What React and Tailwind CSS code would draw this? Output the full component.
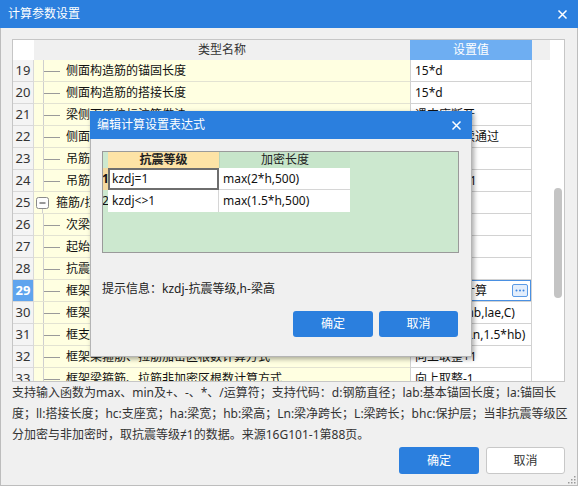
import React from 'react';

const FONT = "font-['Noto_Sans','Noto_Sans_CJK_SC',sans-serif]";

const rows = [
  { n: 19, name: '侧面构造筋的锚固长度', val: '15*d' },
  { n: 20, name: '侧面构造筋的搭接长度', val: '15*d' },
  { n: 21, name: '梁侧面原位标注筋做法', val: '遇支座断开' },
  { n: 22, name: '侧面通长筋遇支座做法', val: '遇支座连续通过' },
  { n: 23, name: '吊筋锚固长度', val: '20*d' },
  { n: 24, name: '吊筋根数计算方式', val: '向上取整+1' },
  { n: 25, name: '箍筋/拉筋', val: '', parent: true },
  { n: 26, name: '次梁两侧共增加箍筋数量', val: '6' },
  { n: 27, name: '起始箍筋距支座边的距离', val: '50' },
  { n: 28, name: '抗震KL、WKL端支座为梁时，则在该端箍筋加密', val: '否' },
  { n: 29, name: '框架梁箍筋加密长度', val: '按照规范计算', sel: true },
  { n: 30, name: '框架扁梁箍筋加密长度', val: 'max(0.5*hb,lae,C)' },
  { n: 31, name: '框支梁箍筋加密长度', val: 'max(0.2*Ln,1.5*hb)' },
  { n: 32, name: '框架梁箍筋、拉筋加密区根数计算方式', val: '向上取整+1' },
  { n: 33, name: '框架梁箍筋、拉筋非加密区根数计算方式', val: '向上取整-1' },
];

function CloseX() {
  return (
    <svg width="11" height="11" viewBox="0 0 11 11">
      <path d="M1.5 1.5L9.5 9.5M9.5 1.5L1.5 9.5" stroke="white" strokeWidth="1.5" />
    </svg>
  );
}

function TreeChild() {
  return (
    <svg width="32" height="21" className="shrink-0">
      <line x1="9.5" y1="0" x2="9.5" y2="21" stroke="#cfcfcf" strokeWidth="1" />
      <line x1="10" y1="11.5" x2="26" y2="11.5" stroke="#9a9a9a" strokeWidth="1" />
    </svg>
  );
}

function TreeParent() {
  return (
    <svg width="22" height="21" className="shrink-0">
      <line x1="8.5" y1="16" x2="8.5" y2="21" stroke="#cfcfcf" strokeWidth="1" />
      <rect x="2.5" y="5.5" width="12" height="11" rx="2" fill="#fdfdfd" stroke="#8a8a8a" />
      <line x1="5.5" y1="11" x2="11.5" y2="11" stroke="#333" strokeWidth="1" />
    </svg>
  );
}

function Row({ r }) {
  return (
    <div className="flex h-[22px] shrink-0">
      <div
        className={`w-[21px] shrink-0 border-r border-b border-[#d9d9d9] flex items-center justify-center text-[13px] ${
          r.sel ? 'bg-[#5fa4ee] text-white font-bold' : 'bg-[#f4f4f4] text-[#333]'
        }`}
      >
        {r.n}
      </div>
      <div className="w-[376px] shrink-0 bg-[#ffffe1] border-b border-[#e3e3d2] flex items-center text-[12px] text-[#111] whitespace-nowrap overflow-hidden">
        {r.parent ? <TreeParent /> : <TreeChild />}
        <span>{r.name}</span>
      </div>
      <div
        className={`w-[122px] shrink-0 border-l border-r border-b border-[#d2d2d2] pl-[4px] pr-[3px] flex items-center justify-between text-[12px] text-[#111] whitespace-nowrap overflow-hidden ${
          r.sel ? 'shadow-[inset_0_0_0_1px_#4a90e2]' : ''
        }`}
      >
        <span>{r.val}</span>
        {r.sel && (
          <span className="w-[16px] h-[13px] rounded-[2px] border border-[#5b9be6] bg-[#e3eefc] flex items-center justify-center">
            <svg width="10" height="3" viewBox="0 0 10 3">
              <circle cx="1.5" cy="1.5" r="1" fill="#3d86e0" />
              <circle cx="5" cy="1.5" r="1" fill="#3d86e0" />
              <circle cx="8.5" cy="1.5" r="1" fill="#3d86e0" />
            </svg>
          </span>
        )}
      </div>
      <div className="w-[18px] shrink-0 bg-white" />
    </div>
  );
}

function Dialog() {
  return (
    <div className="absolute left-[90px] top-[111px] w-[382px] h-[246px] flex flex-col shadow-[2px_2px_5px_rgba(0,0,0,0.35)]">
      <div className="h-[28px] shrink-0 bg-[#2b7fde] flex items-center justify-between pl-[7px] pr-[10px] text-white text-[12px]">
        <span>编辑计算设置表达式</span>
        <CloseX />
      </div>
      <div className="flex-1 bg-[#f0f0f0] border border-t-0 border-[#b4b4b4] flex flex-col pl-[11px] pr-[13px] pt-[12px]">
        <div className="w-[357px] h-[102px] border border-[#9a9a9a] bg-[#cce8cf] flex flex-col">
          <div className="flex h-[16px] text-[12px] text-[#222]">
            <div className="w-[5px] shrink-0" />
            <div className="w-[111px] shrink-0 bg-[#fde3a6] flex items-center justify-center font-bold">抗震等级</div>
            <div className="w-[131px] shrink-0 bg-[#c7e5ca] border-l border-[#b8d6bb] flex items-center justify-center">加密长度</div>
          </div>
          <div className="flex h-[22px] text-[12px] text-[#111]">
            <div className="w-[5px] shrink-0 bg-[#f3d9a0] flex items-center justify-center font-bold overflow-hidden">1</div>
            <div className="w-[111px] shrink-0 bg-white border-2 border-[#6e6e6e] flex items-center pl-[2px]">kzdj=1</div>
            <div className="w-[131px] shrink-0 bg-white border-b border-[#d6d6d6] flex items-center pl-[4px]">max(2*h,500)</div>
          </div>
          <div className="flex h-[22px] text-[12px] text-[#111]">
            <div className="w-[5px] shrink-0 flex items-center justify-center overflow-hidden">2</div>
            <div className="w-[111px] shrink-0 bg-white border-r border-[#d6d6d6] flex items-center pl-[4px]">kzdj&lt;&gt;1</div>
            <div className="w-[131px] shrink-0 bg-white flex items-center pl-[4px]">max(1.5*h,500)</div>
          </div>
        </div>
        <div className="mt-[27px] text-[12px] leading-[17px] text-[#222] whitespace-nowrap">提示信息：kzdj-抗震等级,h-梁高</div>
        <div className="mt-[14px] flex justify-end gap-[6px] pr-[0px]">
          <button className="w-[80px] h-[26px] rounded-[3px] bg-[#2b7fde] text-white text-[12px]">确定</button>
          <button className="w-[79px] h-[26px] rounded-[3px] bg-[#2b7fde] text-white text-[12px]">取消</button>
        </div>
      </div>
    </div>
  );
}

export default function App() {
  return (
    <div className={`relative w-[578px] h-[486px] overflow-hidden bg-[#f0f0f0] ${FONT}`}>
      <div className="h-[28px] bg-[#2b7fde] flex items-center justify-between pl-[8px] pr-[10px] text-white text-[12px]">
        <span>计算参数设置</span>
        <CloseX />
      </div>
      <div className="h-[458px] border border-t-0 border-[#bdbdbd] flex flex-col pl-[11px] pr-[12px] pt-[11px]">
        <div className="w-[553px] h-[343px] shrink-0 border border-[#c6c6c6] bg-white flex overflow-hidden">
          <div className="flex flex-col w-[537px] shrink-0">
            <div className="flex h-[20px] shrink-0 text-[12px]">
              <div className="w-[21px] shrink-0 bg-white" />
              <div className="w-[376px] shrink-0 bg-[#f0f0f0] flex items-center justify-center text-[#333]">类型名称</div>
              <div className="w-[122px] shrink-0 bg-[#6eaef2] flex items-center justify-center text-white">设置值</div>
              <div className="w-[18px] shrink-0 bg-[#f0f0f0]" />
            </div>
            {rows.map((r) => (
              <Row key={r.n} r={r} />
            ))}
          </div>
          <div className="w-[14px] shrink-0 bg-white pt-[148px] pl-[4px]">
            <div className="w-[8px] h-[110px] rounded-full bg-[#c4c4c4]" />
          </div>
        </div>
        <div className="text-[12px] leading-[21px] text-[#333] whitespace-nowrap">
          <div>支持输入函数为max、min及+、-、*、/运算符；支持代码：d:钢筋直径；lab:基本锚固长度；la:锚固长</div>
          <div>度；ll:搭接长度；hc:支座宽；ha:梁宽；hb:梁高；Ln:梁净跨长；L:梁跨长；bhc:保护层；当非抗震等级区</div>
          <div>分加密与非加密时，取抗震等级≠1的数据。来源16G101-1第88页。</div>
        </div>
        <div className="mt-[2px] flex justify-end gap-[7px]">
          <button className="w-[80px] h-[27px] rounded-[3px] bg-[#2b7fde] text-white text-[12px]">确定</button>
          <button className="w-[79px] h-[27px] rounded-[3px] bg-white border border-[#c8c8c8] text-[#333] text-[12px]">取消</button>
        </div>
      </div>
      <svg className="absolute right-[2px] bottom-[2px]" width="8" height="8" viewBox="0 0 8 8">
        <rect x="6" y="0" width="1.5" height="1.5" fill="#999" />
        <rect x="3" y="3" width="1.5" height="1.5" fill="#999" />
        <rect x="6" y="3" width="1.5" height="1.5" fill="#999" />
        <rect x="0" y="6" width="1.5" height="1.5" fill="#999" />
        <rect x="3" y="6" width="1.5" height="1.5" fill="#999" />
        <rect x="6" y="6" width="1.5" height="1.5" fill="#999" />
      </svg>
      <Dialog />
    </div>
  );
}
